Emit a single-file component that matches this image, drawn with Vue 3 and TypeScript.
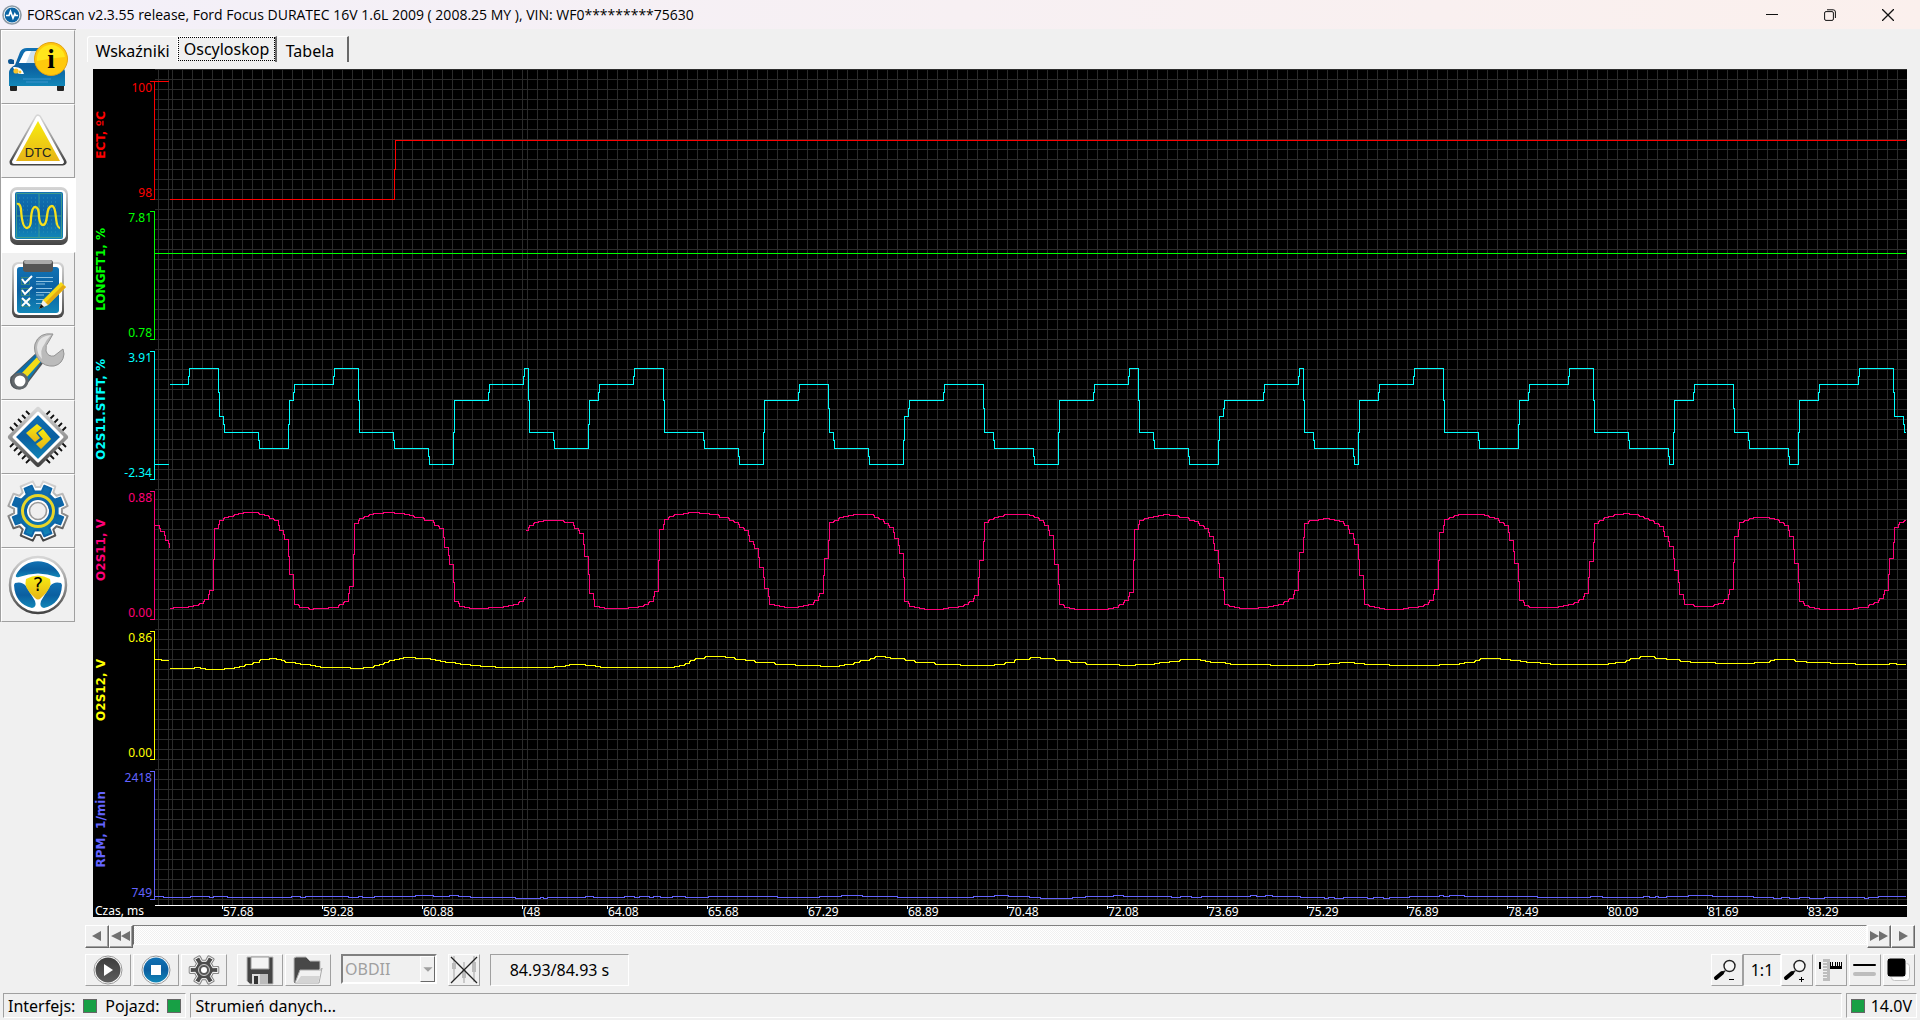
<script setup lang="ts">
import { ref } from 'vue'

interface Channel {
  name: string
  max: string
  min: string
  color: string
  short?: boolean
  runs: string[]
}

// Each run is a list of "x,y" steps; the value holds until the next step.
const channels: Channel[] = [
  {
    name: 'ECT, ºC', max: '100', min: '98', color: '#ff0000', short: true,
    runs: ['155,81 169,81', '170,199 395,140 1906,140'],
  },
  {
    name: 'LONGFT1, %', max: '7.81', min: '0.78', color: '#00ff00',
    runs: ['155,253 1906,253'],
  },
  {
    name: 'O2S11.STFT, %', max: '3.91', min: '-2.34', color: '#00ffff',
    runs: [
      '155,464 169,464',
      '170,384 189,368 219,416 224,432 259,448 289,400 294,384 334,368 359,432 394,448 429,464 454,400 489,384 524,368 529,432 554,448 589,400 599,384 634,368 664,432 704,448 739,464 764,400 799,384 829,432 834,448 869,464 904,416 909,400 944,384 984,432 994,448 1034,464 1059,400 1094,384 1129,368 1139,432 1154,448 1189,464 1219,416 1224,400 1264,384 1299,368 1304,432 1314,448 1354,464 1359,400 1379,384 1414,368 1444,432 1479,448 1519,400 1529,384 1569,368 1594,432 1629,448 1669,464 1674,400 1694,384 1734,432 1749,448 1789,464 1799,400 1819,384 1859,368 1894,416 1904,432 1906,432',
    ],
  },
  {
    name: 'O2S11, V', max: '0.88', min: '0.00', color: '#ff0078',
    runs: [
      '155,525 160,531 165,540 169,547',
      '170,608 174,607 189,606 194,605 199,603 204,599 209,590 214,528 219,520 224,517 229,516 234,514 239,513 244,512 259,514 264,515 269,518 274,520 279,530 284,539 289,574 294,604 299,607 309,609 314,608 329,607 339,604 344,601 349,586 354,523 359,518 364,516 369,514 374,513 384,512 394,513 404,514 409,515 414,517 424,520 434,525 439,528 444,547 449,564 454,601 459,606 464,607 469,608 489,607 504,606 509,605 514,604 519,601 524,597 526,597',
      '526,530 529,525 534,522 539,521 544,520 564,522 574,528 579,533 584,556 589,593 594,606 599,607 604,608 629,607 639,606 644,604 649,601 654,591 659,529 664,519 669,516 674,514 684,513 689,512 699,513 709,514 719,517 729,520 734,522 739,527 744,530 749,541 754,548 759,567 764,588 769,604 774,605 779,606 784,607 799,606 804,605 809,604 814,600 819,593 824,558 829,522 834,520 839,517 844,516 849,515 854,514 874,517 879,519 884,523 889,527 894,538 899,553 904,601 909,606 914,607 919,608 924,609 944,608 949,607 959,606 964,604 969,601 974,595 979,560 984,522 989,519 994,517 999,516 1004,514 1029,515 1034,517 1039,520 1044,525 1049,535 1054,564 1059,604 1064,607 1069,608 1074,609 1109,608 1114,607 1119,604 1124,600 1129,592 1134,529 1139,520 1144,518 1149,517 1154,516 1159,515 1164,514 1169,515 1179,517 1189,520 1194,521 1199,525 1204,528 1209,536 1214,550 1219,577 1224,604 1229,606 1234,607 1239,608 1259,607 1269,606 1274,605 1279,604 1284,601 1289,598 1294,590 1299,552 1304,523 1309,520 1319,519 1324,518 1329,519 1334,520 1339,521 1344,525 1349,533 1354,544 1359,575 1364,604 1369,606 1374,607 1379,608 1384,609 1404,608 1409,607 1419,606 1424,604 1429,600 1434,589 1439,532 1444,519 1449,517 1454,515 1459,514 1484,515 1489,517 1494,518 1499,522 1504,525 1509,540 1514,563 1519,600 1524,605 1529,607 1559,606 1564,605 1569,604 1574,602 1579,599 1584,593 1589,561 1594,523 1599,520 1604,517 1609,516 1614,514 1624,513 1629,514 1639,516 1644,518 1649,520 1654,523 1659,526 1664,536 1669,546 1674,570 1679,594 1684,604 1694,606 1714,604 1719,603 1724,599 1729,589 1734,536 1739,522 1744,520 1749,518 1754,517 1769,518 1774,519 1779,522 1784,525 1789,536 1794,563 1799,601 1804,605 1809,607 1814,608 1819,609 1854,608 1859,607 1869,604 1874,602 1879,598 1884,590 1889,558 1894,527 1899,522 1904,520 1906,520',
    ],
  },
  {
    name: 'O2S12, V', max: '0.86', min: '0.00', color: '#ffff00',
    runs: [
      '155,659 161,660 169,660',
      '170,668 195,667 200,668 205,669 225,668 235,667 240,666 245,664 253,662 260,659 270,658 276,659 281,660 285,662 295,663 300,664 310,665 315,666 320,667 350,668 364,667 374,665 380,664 384,662 389,660 395,659 400,658 404,657 415,658 430,659 435,660 440,661 445,662 455,663 460,664 470,665 480,666 495,667 555,666 566,665 570,664 585,665 595,666 600,667 675,666 680,665 685,663 690,660 695,658 705,656 725,657 735,659 745,660 755,662 775,664 795,665 820,666 840,665 845,664 854,662 860,660 870,658 875,656 885,657 890,658 905,660 915,662 935,664 960,665 995,664 1005,662 1015,659 1030,657 1040,658 1055,660 1070,662 1086,664 1119,665 1136,664 1155,663 1160,662 1170,661 1180,659 1200,660 1205,661 1210,662 1225,663 1230,664 1270,665 1315,664 1330,663 1340,662 1354,663 1364,664 1389,665 1440,664 1460,663 1465,662 1475,660 1480,658 1500,659 1510,660 1520,661 1526,662 1540,663 1550,664 1609,663 1616,662 1626,660 1630,658 1640,656 1655,658 1666,659 1680,661 1690,662 1715,663 1755,662 1770,660 1775,659 1795,661 1806,662 1830,663 1855,664 1890,663 1896,664 1906,664',
    ],
  },
  {
    name: 'RPM, 1/min', max: '2418', min: '749', color: '#6464ff',
    runs: [
      '155,896 163,897 191,896 209,897 214,896 227,897 292,896 300,897 306,896 348,897 359,896 362,897 375,896 416,895 433,896 450,895 458,896 470,897 515,898 541,897 543,898 548,897 586,896 593,897 625,896 634,897 640,896 649,897 654,896 660,897 673,896 685,897 709,896 777,897 820,896 842,895 862,896 897,897 974,896 995,895 1008,896 1029,897 1040,898 1073,897 1086,896 1114,895 1123,896 1171,897 1181,896 1191,897 1202,896 1251,895 1256,896 1266,895 1272,896 1300,897 1324,898 1329,897 1334,898 1344,897 1367,898 1374,897 1383,898 1390,897 1410,896 1440,895 1443,896 1450,895 1464,896 1537,897 1591,896 1602,897 1644,896 1649,897 1656,896 1658,897 1667,896 1689,895 1712,896 1753,897 1773,898 1782,897 1789,898 1800,897 1809,898 1825,897 1864,898 1869,897 1879,896 1906,896',
    ],
  },
]

const plot = { x: 155, y: 69, w: 1752, h: 836 }

function stepPath(run: string): string {
  const pts = run.split(' ').map((p) => p.split(',').map(Number))
  let d = `M${pts[0][0]} ${pts[0][1] + 0.5}`
  for (let i = 1; i < pts.length; i++) {
    const [x, y] = pts[i]
    const prev = pts[i - 1][1]
    d += prev === y ? `H${x}` : `H${x - 0.5}V${(prev + y) / 2}H${x + 0.5}V${y + 0.5}`
  }
  return d
}

const range = (from: number, to: number, step: number): number[] => {
  const out: number[] = []
  for (let v = from; v <= to; v += step) out.push(v)
  return out
}

const gridX = [158, 168, ...range(172, 522, 10), ...range(527, 1906, 10)]
const gridY = range(69, 899, 10)
const gridPath =
  gridX.map((x) => `M${x + 0.5} ${plot.y}v${plot.h}`).join('') +
  gridY.map((y) => `M${plot.x} ${y + 0.5}h${plot.w}`).join('')

const times = [
  { x: 222, t: '57.68' }, { x: 322, t: '59.28' }, { x: 422, t: '60.88' }, { x: 522, t: '(48' },
  { x: 607, t: '64.08' }, { x: 707, t: '65.68' }, { x: 807, t: '67.29' }, { x: 907, t: '68.89' },
  { x: 1007, t: '70.48' }, { x: 1107, t: '72.08' }, { x: 1207, t: '73.69' }, { x: 1307, t: '75.29' },
  { x: 1407, t: '76.89' }, { x: 1507, t: '78.49' }, { x: 1607, t: '80.09' }, { x: 1707, t: '81.69' },
  { x: 1807, t: '83.29' },
].map((e) => ({ t: e.t, left: `${((e.x - plot.x) / plot.w) * 100}%` }))

const tabs = ['Wskaźniki', 'Oscyloskop', 'Tabela']
const activeTab = ref('Oscyloskop')

const tools = ['car', 'dtc', 'scope', 'tests', 'service', 'chip', 'settings', 'help']
const toolNames = ['Pojazd', 'DTC', 'Oscyloskop', 'Testy', 'Serwis', 'Konfiguracja', 'Ustawienia', 'Pomoc']
const activeTool = ref('scope')

const gearPath = (cx: number, cy: number, outer: number, inner: number, n: number, wOut: number, wIn: number): string => {
  const pts: string[] = []
  for (let i = 0; i < n; i++) {
    const a = (i / n) * Math.PI * 2 - Math.PI / 2 + Math.PI / n
    for (const [r, o] of [[inner, -wIn], [outer, -wOut], [outer, wOut], [inner, wIn]]) {
      pts.push(`${(cx + r * Math.cos(a + o)).toFixed(1)} ${(cy + r * Math.sin(a + o)).toFixed(1)}`)
    }
  }
  return `M${pts.join('L')}Z`
}
const bigGearOuter = gearPath(37, 37, 30, 24, 8, 0.22, 0.3)
const bigGearInner = gearPath(37, 37, 26, 20, 8, 0.15, 0.2)
const smallGear = gearPath(23, 16, 14, 9, 6, 0.18, 0.26)
</script>

<template>
  <div class="window">
    <svg class="defs" width="0" height="0" aria-hidden="true">
      <defs>
        <linearGradient id="blue" x1="0" y1="0" x2="0" y2="1">
          <stop offset="0" stop-color="#1272b4" /><stop offset=".5" stop-color="#0b5fa0" /><stop offset="1" stop-color="#1287b8" />
        </linearGradient>
        <linearGradient id="rim" x1="0" y1="0" x2="0" y2="1">
          <stop offset="0" stop-color="#d6d6d6" /><stop offset=".5" stop-color="#969696" /><stop offset="1" stop-color="#444" />
        </linearGradient>
        <linearGradient id="gold" x1="0" y1="0" x2="0" y2="1">
          <stop offset="0" stop-color="#f8ec10" /><stop offset="1" stop-color="#e6b417" />
        </linearGradient>
        <linearGradient id="dark" x1="0" y1="0" x2="0" y2="1">
          <stop offset="0" stop-color="#3c3c3c" /><stop offset="1" stop-color="#5e5e5e" />
        </linearGradient>
      </defs>
    </svg>

    <header class="titlebar">
      <svg class="appicon" viewBox="0 0 20 20" aria-hidden="true">
        <circle cx="10" cy="10" r="9" fill="#fff" stroke="#8c9aa6" stroke-width="1.6" />
        <circle cx="10" cy="10" r="7.4" fill="#0b64a4" />
        <path d="M4 10.5h3l1.5-4 2.5 6.5 1.8-4 .8 1.5h2.4" fill="none" stroke="#fff" stroke-width="1.7" />
      </svg>
      <h1>FORScan v2.3.55 release, Ford Focus DURATEC 16V 1.6L 2009 ( 2008.25 MY ), VIN: WF0*********75630</h1>
      <button class="wbtn" aria-label="Minimalizuj"><svg width="12" height="12" viewBox="0 0 12 12"><path d="M0 5.5h12" stroke="#111" /></svg></button>
      <button class="wbtn" aria-label="Przywróć">
        <svg width="12" height="12" viewBox="0 0 12 12" fill="none" stroke="#111">
          <rect x=".6" y="2.6" width="8.8" height="8.8" rx="1.4" /><path d="M3 .8h6.2a2.2 2.2 0 0 1 2.2 2.2V9" />
        </svg>
      </button>
      <button class="wbtn" aria-label="Zamknij"><svg width="12" height="12" viewBox="0 0 12 12"><path d="M0 0l12 12M12 0L0 12" stroke="#111" stroke-width="1.300" /></svg></button>
    </header>

    <div class="body">
      <nav class="sidebar">
        <button
          v-for="(t, i) in tools" :key="t" class="tool" :class="{ active: activeTool === t }"
          :aria-label="toolNames[i]" @click="activeTool = t"
        >
          <svg viewBox="0 0 74 74" aria-hidden="true">
            <g v-if="t === 'car'">
              <rect x="9" y="50" width="7" height="11" rx="1" fill="#222" /><rect x="56" y="50" width="7" height="11" rx="1" fill="#222" />
              <path d="M8 56V43q0-5 6-8l5-13q2-4 7-4h20q5 0 8 4l6 13q4 3 4 8v13z" fill="url(#blue)" />
              <path d="M7 31q0-2 3-2l3 1v4H9q-2 0-2-3z" fill="#0b5490" />
              <path d="M18 33l5-10q1-2 4-2h12l-5 12z" fill="#cfe2f0" /><path d="M18 33l5-10q1-2 4-2h3l-5 12z" fill="#fff" />
              <path d="M12 37q9-1 11 7-9 1-11-7z" fill="#fff" /><circle cx="15" cy="41" r="2.6" fill="#fbc42b" /><circle cx="19" cy="42" r="1.4" fill="#fbc42b" />
              <path d="M22 49h28M25 52h22" stroke="#3a93cc" />
              <circle cx="50" cy="29" r="16.5" fill="#ffc90c" stroke="#e2a114" /><path d="M36 31a14 14 0 0 1 28-4q-14 1-28 4z" fill="#ffe61c" />
              <text x="50" y="38" text-anchor="middle" class="info">i</text>
            </g>
            <g v-else-if="t === 'dtc'">
              <path d="M37 14L62 58H12z" fill="url(#rim)" stroke="url(#rim)" stroke-width="7" stroke-linejoin="round" />
              <path d="M37 14L61 58H13z" fill="#fff" stroke="#fff" stroke-width="4" stroke-linejoin="round" />
              <path d="M37 17L59 57H15z" fill="url(#gold)" />
              <text x="37" y="53" text-anchor="middle" class="dtc">DTC</text>
            </g>
            <g v-else-if="t === 'scope'">
              <rect x="9" y="9" width="58" height="58" rx="7" fill="url(#rim)" /><rect x="11" y="12" width="54" height="50" rx="5" fill="#fff" />
              <rect x="14" y="14" width="48" height="47" rx="2" fill="url(#blue)" />
              <path d="M18 20h40M18 24h40M18 28h40M18 32h40M18 42h40M18 46h40M18 50h40M18 54h40" stroke="#2b90b8" stroke-dasharray="1 3" />
              <path d="M15.500 15.500h45v44h-45zM38 15v45M15 38h46" fill="none" stroke="#3f9a8c" />
              <path d="M16 26q3-1 4 5 1 19 6 19 4 0 4-10 1-11 4-11 4 0 4 10 1 8 4 8 3 0 4-9 1-10 5-10 3 0 4 12 1 10 4 10" fill="none" stroke="#f6e01c" stroke-width="2.300" />
            </g>
            <g v-else-if="t === 'tests'">
              <rect x="11" y="10" width="52" height="56" rx="6" fill="url(#rim)" /><rect x="13" y="12" width="48" height="51" rx="5" fill="#fff" />
              <rect x="16" y="15" width="42" height="46" rx="3" fill="url(#blue)" />
              <rect x="22" y="8" width="30" height="12" rx="3" fill="#555" /><rect x="23" y="8" width="28" height="4" rx="2" fill="#aaa" />
              <g fill="none" stroke="#37857c"><rect x="20.500" y="25.500" width="8" height="7" /><rect x="20.500" y="36.500" width="8" height="7" /><rect x="20.500" y="47.500" width="8" height="7" /></g>
              <g fill="none" stroke="#fff" stroke-width="2"><path d="M21 27l3 4 7-7M21 38l3 4 7-7M21 46l8 8M29 46l-8 8" /></g>
              <path d="M35 25.500h17M35 29.500h17M35 32h9M35 36.500h16M35 40.500h14M35 43h8M35 47.500h10M35 51.500h7" stroke="#8ec1e0" />
              <path d="M38 57l4-9 18-18 5 5-18 18z" fill="#f6d916" /><path d="M44 51l18-18 3 2-18 18z" fill="#e4a912" />
              <path d="M38 57l4-9 5 5z" fill="#eee" /><path d="M38 57l2-5 3 3z" fill="#111" />
            </g>
            <g v-else-if="t === 'service'">
              <path d="M35 27L9.500 51q-2 7 3 11 7 4 12-2L43 36z" fill="#4d5358" />
              <path d="M35 28L14 48l3 2L40 32z" fill="#0c6ca8" /><path d="M37 30L21 50l6 5L41 35z" fill="#1179ae" /><path d="M37 30L20 48l5 4 16-18z" fill="#f2dc18" />
              <circle cx="19" cy="55" r="7" fill="#fff" stroke="#62676b" stroke-width="3" />
              <path d="M52 8q-14-2-18 10-2 8 4 16 6 7 15 6 9-2 10-12l-1-5-9 7q-6 1-8-5-1-6 3-10z" fill="#bbb" stroke="#939393" stroke-width="1" />
              <path d="M50 9Q37 10 36 21q0 7 5 12-2-10 2-14 2-5 7-10z" fill="#e4e4e4" />
            </g>
            <g v-else-if="t === 'chip'">
              <path d="M9 27l5 5M13 23l5 5M17 19l5 5M21 15l5 5M25 11l5 5M65 27l-5 5M61 23l-5 5M57 19l-5 5M53 15l-5 5M49 11l-5 5M9 47l5-5M13 51l5-5M17 55l5-5M21 59l5-5M25 63l5-5M65 47l-5-5M61 51l-5-5M57 55l-5-5M53 59l-5-5M49 63l-5-5" stroke="#111" stroke-width="1.800" />
              <path d="M37 10L64 37 37 64 10 37z" fill="url(#rim)" stroke="url(#rim)" stroke-width="6" stroke-linejoin="round" />
              <path d="M37 13L61 37 37 61 13 37z" fill="url(#blue)" stroke="#fff" stroke-width="3" stroke-linejoin="round" />
              <path d="M25 33L36 24 41 28 35 33 39 38 34 42z" fill="url(#gold)" />
              <path d="M50 39L42 29 37 33 42 39 35 44 40 49z" fill="url(#gold)" />
            </g>
            <g v-else-if="t === 'settings'">
              <path :d="bigGearOuter" fill="#fff" stroke="url(#rim)" stroke-width="2" stroke-linejoin="round" />
              <path :d="bigGearInner" fill="url(#blue)" stroke="#0d66a8" stroke-width="2" stroke-linejoin="round" />
              <circle cx="37" cy="37" r="15.500" fill="none" stroke="#e8d62a" stroke-width="3" />
              <circle cx="37" cy="37" r="11" fill="#fff" /><circle cx="37" cy="37" r="8.500" fill="#efefef" stroke="#999" stroke-width="1.600" />
            </g>
            <g v-else>
              <circle cx="37" cy="37" r="28" fill="#fff" stroke="url(#rim)" stroke-width="2.500" />
              <path d="M15 27a24.500 24.500 0 0 1 44 0q1 3-3 2Q37 22 18 29q-4 1-3-2z" fill="url(#blue)" />
              <path d="M14 35q7-2 11 3l9 15q2 6-3 7-17-4-18-23zM60 35q-7-2-11 3l-9 15q-2 6 3 7 17-4 18-23z" fill="url(#blue)" />
              <path d="M25 31q12-7 24 0 3 9-9 19-3 3-6 0-12-10-9-19z" fill="url(#gold)" />
              <text x="37" y="43" text-anchor="middle" class="ask">?</text>
            </g>
          </svg>
        </button>
      </nav>

      <main class="content">
        <div class="tabs" role="tablist">
          <button
            v-for="t in tabs" :key="t" class="tab" role="tab" :class="{ on: t === activeTab }"
            :aria-selected="t === activeTab" @click="activeTab = t"
          ><span>{{ t }}</span></button>
        </div>

        <section class="chart">
          <div class="axes">
            <div v-for="c in channels" :key="c.name" class="axis" :class="{ short: c.short }" :style="{ color: c.color }">
              <span class="name">{{ c.name }}</span>
              <span class="limits"><span>{{ c.max }}</span><span>{{ c.min }}</span></span>
            </div>
          </div>
          <svg class="plot" :viewBox="`${plot.x} ${plot.y} ${plot.w} ${plot.h}`" preserveAspectRatio="none" shape-rendering="crispEdges" fill="none">
            <path :d="gridPath" stroke="#2b2b2b" vector-effect="non-scaling-stroke" />
            <g v-for="c in channels" :key="c.name" :stroke="c.color">
              <path v-for="r in c.runs" :key="r" :d="stepPath(r)" vector-effect="non-scaling-stroke" />
            </g>
          </svg>
          <div class="unit">Czas, ms</div>
          <div class="times">
            <span v-for="e in times" :key="e.t" class="time" :style="{ left: e.left }">{{ e.t }}</span>
          </div>
        </section>

        <div class="scroll">
          <button class="sbtn" aria-label="Wstecz"><svg width="24" height="23" viewBox="0 0 24 23"><path d="M7 11l9-5v10z" /></svg></button>
          <button class="sbtn" aria-label="Na początek"><svg width="24" height="23" viewBox="0 0 24 23"><path d="M2 11l10-5v10zM12 11l9-5v10z" /></svg></button>
          <div class="track"></div>
          <button class="sbtn" aria-label="Na koniec"><svg width="24" height="23" viewBox="0 0 24 23"><path d="M12 11L3 6v10zM21 11l-9-5v10z" /></svg></button>
          <button class="sbtn" aria-label="Dalej"><svg width="24" height="23" viewBox="0 0 24 23"><path d="M17 11L8 6v10z" /></svg></button>
        </div>

        <div class="toolbar">
          <button class="btn wide" aria-label="Start">
            <svg viewBox="0 0 46 32"><circle cx="23" cy="16" r="14" fill="#fff" stroke="#999" /><circle cx="23" cy="16" r="12.500" fill="url(#dark)" /><path d="M19 10l9 6-9 6z" fill="#fff" /></svg>
          </button>
          <button class="btn wide" aria-label="Stop">
            <svg viewBox="0 0 46 32"><circle cx="23" cy="16" r="14" fill="#fff" stroke="#999" /><circle cx="23" cy="16" r="12.500" fill="url(#blue)" /><path d="M18 11h10v10H18z" fill="#fff" /></svg>
          </button>
          <button class="btn wide" aria-label="Parametry">
            <svg viewBox="0 0 46 32">
              <path :d="smallGear" fill="#555" stroke="#888" stroke-width="3" stroke-linejoin="round" />
              <path :d="smallGear" fill="#4c4c4c" stroke="#fff" stroke-width="1" stroke-linejoin="round" />
              <circle cx="23" cy="16" r="5.500" fill="#555" stroke="#ccc" /><circle cx="23" cy="16" r="3" fill="#fff" />
            </svg>
          </button>
          <button class="btn wide gap" aria-label="Zapisz">
            <svg viewBox="0 0 46 32"><path d="M10 3h26v27H13l-3-3z" fill="#444" stroke="#bbb" /><path d="M14 3h18v12H14z" fill="#f4f4f4" stroke="#999" /><path d="M15 20h16v10H15z" fill="#ddd" /><path d="M17 22h4v8h-4z" fill="#333" /><path d="M23 20h8v10h-8z" fill="#bbb" /></svg>
          </button>
          <button class="btn wide" aria-label="Otwórz">
            <svg viewBox="0 0 46 32"><path d="M9 28V4l2-1h10l4 4h10v8" fill="#484848" stroke="#bbb" /><path d="M9 29l2-4V6h10l4 4h9v19z" fill="#484848" /><path d="M10 29l5-13h21l1-2-3 15z" fill="#f2f2f2" stroke="#aaa" /><path d="M11 29l5-7h19l-2 7z" fill="#d4d4d4" /></svg>
          </button>
          <div class="combo">
            <select aria-label="Protokół" disabled><option>OBDII</option></select>
            <span class="arrow"><svg width="13" height="26" viewBox="0 0 13 26"><path d="M2 11h10l-5 5z" fill="#a0a0a0" /></svg></span>
          </div>
          <button class="btn mid" aria-label="Znaczniki">
            <svg viewBox="0 0 32 32">
              <path d="M6 2v12M16 17v12M26 2v10M6 14v12M16 8v10M26 14v14" stroke="#c9c9c9" stroke-width="2" /><path d="M4 9h4v6H4zM14 16h4v8h-4zM24 8h4v10h-4z" fill="#bbb" />
              <path d="M3 3l26 26M29 3L3 29" stroke="#222" stroke-width="1.300" />
            </svg>
          </button>
          <output class="clock">84.93/84.93 s</output>
          <span class="spacer"></span>
          <button class="btn sq" aria-label="Pomniejsz">
            <svg viewBox="0 0 32 32"><circle cx="18.500" cy="12" r="5.500" fill="#f6f6f6" stroke="#222" stroke-width="1.400" /><path d="M14 17l-3 2" stroke="#222" stroke-width="2" /><path d="M11 19l-6 5" stroke="#000" stroke-width="4" stroke-linecap="round" /><path d="M18 25.500h5" stroke="#000" /></svg>
          </button>
          <button class="btn ratio">1:1</button>
          <button class="btn sq" aria-label="Powiększ">
            <svg viewBox="0 0 32 32"><circle cx="18.500" cy="12" r="5.500" fill="#f6f6f6" stroke="#222" stroke-width="1.400" /><path d="M14 17l-3 2" stroke="#222" stroke-width="2" /><path d="M11 19l-6 5" stroke="#000" stroke-width="4" stroke-linecap="round" /><path d="M18 25.500h5M20.500 23v5" stroke="#000" /></svg>
          </button>
          <button class="btn sq rgap" aria-label="Siatka">
            <svg viewBox="0 0 32 32" shape-rendering="crispEdges"><path d="M4 8h2v7H4zM15 12h12v3H15zM15 8h1v4h-1zM17 8h1v4h-1zM20 8h1v4h-1zM22 8h1v4h-1zM24 8h1v4h-1zM26 8h1v4h-1z" fill="#000" /><path d="M8 5h7v22H8z" fill="#bdbdbd" /><path d="M8 8h4M8 11h4M8 14h4M8 17h4M8 20h4M8 23h4" stroke="#f0f0f0" /></svg>
          </button>
          <button class="btn sq rgap" aria-label="Linie">
            <svg viewBox="0 0 32 32"><path d="M5 11h21" stroke="#000" stroke-width="2" stroke-linecap="round" /><path d="M6 20h19" stroke="#bdbdbd" stroke-width="4" stroke-linecap="round" /></svg>
          </button>
          <button class="btn sq rgap" aria-label="Kolor tła">
            <svg viewBox="0 0 32 32"><rect x="8.500" y="9.500" width="18" height="17" rx="3" fill="#fff" stroke="#c4c4c4" /><rect x="4" y="4" width="19" height="19" rx="3" fill="#000" stroke="#f0f0f0" /></svg>
          </button>
        </div>
      </main>
    </div>

    <footer class="status">
      <div class="pane"><span>Interfejs:</span><i class="led"></i><span>Pojazd:</span><i class="led"></i></div>
      <div class="pane grow">Strumień danych...</div>
      <div class="pane volt"><i class="led"></i><span>14.0V</span></div>
    </footer>
  </div>
</template>

<style>
body {
  margin: 0;
  background: #f0f0f0;
}
</style>

<style scoped>
* {
  box-sizing: border-box;
}
.window {
  display: flex;
  flex-direction: column;
  min-height: 100vh;
  background: #f0f0f0;
  color: #000;
  font: 16px/20px 'Noto Sans', 'DejaVu Sans', sans-serif;
}
.defs {
  position: absolute;
}
button {
  margin: 0;
  padding: 0;
  border: 0;
  background: none;
  color: inherit;
  font: inherit;
}
button svg {
  display: block;
}
.titlebar {
  display: flex;
  align-items: center;
  height: 29px;
  padding-right: 3px;
  background: linear-gradient(90deg, #f3f0f9, #fbf0ed);
}
.appicon {
  width: 20px;
  height: 20px;
  margin: 0 5px 0 2px;
}
h1 {
  flex: 1;
  margin: 0;
  font: 14px/20px 'Open Sans', 'Noto Sans', sans-serif;
}
.wbtn {
  display: flex;
  justify-content: center;
  width: 58px;
}
.body {
  display: flex;
  flex: 1;
}
.sidebar {
  display: flex;
  flex-direction: column;
  align-self: flex-start;
  width: 76px;
  border-top: 1px solid #a0a0a0;
  border-left: 1px solid #a0a0a0;
}
.tool {
  height: 74px;
  width: 74px;
  border: 1px solid;
  border-color: #fff #a0a0a0 #a0a0a0 #fff;
}
.tool svg {
  width: 74px;
  height: 74px;
  margin: -1px;
}
.tool.active {
  width: 75px;
  background: #fff;
  border-color: #fff;
}
.info {
  font: bold 27px 'Liberation Serif', serif;
}
.dtc {
  font: 13px 'Liberation Sans', sans-serif;
  fill: #222;
}
.ask {
  font: 19px 'DejaVu Sans', sans-serif;
}
.content {
  flex: 1;
  min-width: 0;
  display: flex;
  flex-direction: column;
  padding: 0 5px 7px 9px;
}
.tabs {
  display: flex;
  height: 40px;
  padding: 7px 0 7px 2px;
}
.tab {
  display: flex;
  align-items: center;
  justify-content: center;
  width: 90px;
  padding-top: 3px;
  border-top: 1px solid #fff;
  border-left: 1px solid #fff;
  border-top-left-radius: 3px;
  font-size: 16px;
}
.tab.on {
  width: 100px;
  padding: 0 1px 1px;
  border-right: 2px solid #696969;
}
.tab.on span {
  padding: 0 5px;
  border: 1px dotted #000;
  line-height: 22px;
}
.tab:last-child {
  width: 72px;
  padding-right: 4px;
  border-left: 0;
  border-right: 2px solid #696969;
}
.chart {
  flex: 1;
  display: grid;
  grid-template-columns: 62px 1fr;
  grid-template-rows: 1fr 12px;
  margin: 0 8px;
  background: #000;
  font-size: 12px;
  line-height: 12px;
}
.axes {
  display: flex;
  flex-direction: column;
  gap: 11px;
  padding: 12px 0 5px;
}
.axis {
  position: relative;
  flex: 129 1 0;
  display: flex;
  justify-content: space-between;
  border-right: 1px solid currentColor;
}
.axis.short {
  flex-grow: 119;
}
.axis::before,
.axis::after {
  content: '';
  position: absolute;
  right: 0;
  width: 4px;
  border-top: 1px solid currentColor;
}
.axis::before {
  top: 0;
}
.axis::after {
  bottom: 0;
}
.name {
  align-self: center;
  padding-top: 12px;
  padding-right: 1px;
  writing-mode: vertical-rl;
  transform: rotate(180deg);
  font: bold 12px/14px 'DejaVu Sans', sans-serif;
  white-space: nowrap;
}
.limits {
  display: flex;
  flex-direction: column;
  justify-content: space-between;
  align-items: flex-end;
  padding: 1px 2px 1px 0;
}
.plot {
  width: 100%;
  height: 100%;
  min-height: 300px;
}
.unit {
  padding-left: 2px;
  color: #fff;
  white-space: nowrap;
}
.times {
  position: relative;
  border-top: 1px solid #fff;
  color: #fff;
}
.time {
  position: absolute;
  top: 0;
  padding-left: 1px;
  line-height: 11px;
}
.time::before {
  content: '';
  position: absolute;
  left: 0;
  top: 0;
  height: 3px;
  border-left: 1px solid #fff;
}
.scroll {
  display: flex;
  margin-top: 8px;
  height: 23px;
}
.sbtn {
  width: 24px;
  border: 1px solid;
  border-color: #fff #696969 #696969 #fff;
  box-shadow: inset -1px -1px #a0a0a0;
}
.sbtn svg {
  margin: -1px;
  fill: #707070;
}
.track {
  flex: 1;
  height: 20px;
  border: 1px solid;
  border-color: #808080 #fff #fff #696969;
  background: repeating-conic-gradient(#fff 0 25%, #f0f0f0 0 50%) 0 0 / 2px 2px;
}
.toolbar {
  display: flex;
  margin-top: 6px;
  height: 32px;
}
.btn {
  border: 1px solid;
  border-color: #fff #a0a0a0 #a0a0a0 #fff;
}
.btn svg {
  height: 32px;
  margin: -1px;
}
.wide {
  width: 46px;
  margin-right: 2px;
}
.wide svg {
  width: 46px;
}
.gap {
  margin-left: 8px;
}
.combo {
  display: flex;
  width: 96px;
  height: 30px;
  margin: 0 11px 0 8px;
  border: 2px solid;
  border-color: #808080 #fff #fff #808080;
}
.combo select {
  flex: 1;
  min-width: 0;
  padding: 0 2px;
  border: 0;
  appearance: none;
  background: none;
  color: #a0a0a0;
  font: inherit;
  opacity: 1;
}
.arrow {
  display: flex;
  border: 1px solid;
  border-color: #fff #696969 #696969 #fff;
}
.arrow svg {
  height: 24px;
}
.mid {
  width: 32px;
  margin-right: 10px;
}
.mid svg,
.sq svg {
  width: 32px;
}
.clock {
  width: 139px;
  border: 1px solid;
  border-color: #a0a0a0 #fff #fff #a0a0a0;
  text-align: center;
  line-height: 30px;
}
.spacer {
  flex: 1;
}
.sq {
  width: 32px;
}
.ratio {
  width: 38px;
  border-color: #a0a0a0 #fff #fff #a0a0a0;
}
.rgap {
  margin-left: 2px;
}
.status {
  display: flex;
  gap: 4px;
  height: 27px;
  padding: 0 3px 2px;
}
.pane {
  display: flex;
  align-items: center;
  gap: 8px;
  padding: 0 4px;
  border: 1px solid;
  border-color: #a0a0a0 #fff #fff #a0a0a0;
}
.volt {
  gap: 6px;
}
.grow {
  flex: 1;
}
.led {
  width: 14px;
  height: 14px;
  border: 1px solid #666;
  background: #17a045;
}
</style>
